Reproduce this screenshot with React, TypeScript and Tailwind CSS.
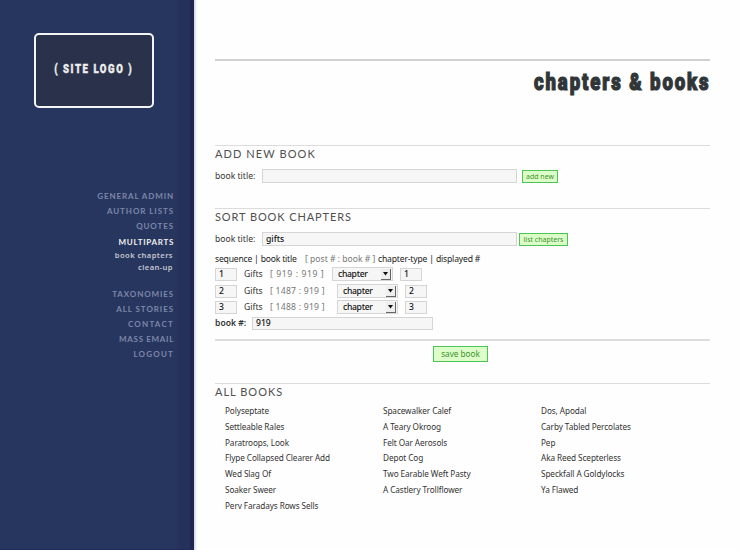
import React from 'react';

const primary = [
  ['GENERAL ADMIN', 'tracking-[0.88px]'],
  ['AUTHOR LISTS', 'tracking-[0.93px]'],
  ['QUOTES', 'tracking-[0.9px]'],
];
const secondary = [
  ['TAXONOMIES', 'tracking-[0.88px]'],
  ['ALL STORIES', 'tracking-[0.93px]'],
  ['CONTACT', 'tracking-[1.22px]'],
  ['MASS EMAIL', 'tracking-[0.68px]'],
  ['LOGOUT', 'tracking-[1.18px]'],
];

const chapters = [
  { seq: '1', ref: '[ 919 : 919 ]', refWidth: 'w-[62px]', tracking: 'tracking-[0.6px]' },
  { seq: '2', ref: '[ 1487 : 919 ]', refWidth: 'w-[67px]', tracking: 'tracking-[0.25px]' },
  { seq: '3', ref: '[ 1488 : 919 ]', refWidth: 'w-[67px]', tracking: 'tracking-[0.25px]' },
];

const books = [
  ['Polyseptate', 'Settleable Rales', 'Paratroops, Look', 'Flype Collapsed Clearer Add', 'Wed Slag Of', 'Soaker Sweer', 'Perv Faradays Rows Sells'],
  ['Spacewalker Calef', 'A Teary Okroog', 'Felt Oar Aerosols', 'Depot Cog', 'Two Earable Weft Pasty', 'A Castlery Trollflower'],
  ['Dos, Apodal', 'Carby Tabled Percolates', 'Pep', 'Aka Reed Scepterless', 'Speckfall A Goldylocks', 'Ya Flawed'],
];

function Heading({ children, className }: { children: React.ReactNode; className: string }) {
  return (
    <h2 className={`h-[18px] border-t border-[#dcdcdc] font-['Lato',sans-serif] text-[11px] leading-[15px] font-normal text-[#505050] ${className}`}>
      {children}
    </h2>
  );
}

function Field({ value, className }: { value?: string; className: string }) {
  return (
    <div className={`flex shrink-0 items-center border border-[#d5d5d5] bg-[#f6f6f6] pl-[3px] font-medium text-[#111] ${className}`}>
      {value}
    </div>
  );
}

function Button({ children, className }: { children: React.ReactNode; className: string }) {
  return (
    <button className={`flex shrink-0 items-center justify-center border border-[#4cc552] bg-[#dcffca] text-[#3f8f2b] ${className}`}>
      {children}
    </button>
  );
}

function ChapterSelect({ className }: { className: string }) {
  return (
    <div className={`flex w-[61px] shrink-0 items-center justify-between border border-[#d5d5d5] bg-[#f6f6f6] pr-[1px] pl-[5px] font-medium text-[#111] ${className}`}>
      <span className="tracking-[-0.3px]">chapter</span>
      <span className="flex h-[11px] w-[10px] items-center justify-center border-r border-b border-[#666] bg-[#eee]">
        <svg width="5" height="4" viewBox="0 0 5 4"><path d="M0 0h5L2.5 3.5z" fill="#111" /></svg>
      </span>
    </div>
  );
}

export default function App() {
  return (
    <div className="flex h-[550px] w-[740px] overflow-hidden bg-[#fefefe] font-['Noto_Sans',sans-serif] text-[8.6px] leading-none whitespace-nowrap text-[#333]">
      <aside className="flex w-[194px] shrink-0 border-b border-[#202c55] bg-[#27365e]">
        <div className="flex h-full w-[176px] flex-col">
          <div className="mt-[33px] ml-[34px] flex h-[75px] w-[120px] items-center justify-center rounded-[5px] border-2 border-[#f4f4f4] bg-[#2a324b]">
            <span className="-mt-[4px] scale-x-[0.71] font-['Roboto',sans-serif] text-[13.5px] font-black tracking-[2.2px] text-[#eee] [-webkit-text-stroke:0.4px_#eee]">( SITE LOGO )</span>
          </div>
          <nav className="mt-[81px] flex flex-col pr-[2px] text-right font-['Lato',sans-serif] text-[8px] font-bold text-[#7e87aa]">
            {primary.map(([t, tracking]) => <a key={t} className={`h-[15px] leading-[15px] ${tracking}`}>{t}</a>)}
            <a className="h-[15px] leading-[16px] tracking-[0.7px] text-[#f0f0f0]">MULTIPARTS</a>
            <div className="flex h-[38px] flex-col pr-[1px] font-['Noto_Sans',sans-serif] text-[7.6px] font-semibold tracking-[0.4px] text-[#c3c6d0]">
              <a className="h-[12px] leading-[12px]">book chapters</a>
              <a className="h-[12px] leading-[12px]">clean-up</a>
            </div>
            {secondary.map(([t, tracking]) => <a key={t} className={`h-[15px] leading-[15px] ${tracking}`}>{t}</a>)}
          </nav>
        </div>
        <div className="h-full w-[3px] bg-[#2a315d]" />
        <div className="h-full w-[11px] bg-[#24315b]" />
        <div className="h-full w-1 bg-[#20264f]" />
      </aside>
      <div className="h-full w-[3px] shrink-0 bg-linear-to-r from-[#cbd5e0] to-[#fefefe]" />
      <main className="ml-[18px] w-[495px] shrink-0">
        <header className="mt-[59px] flex h-[86px] justify-end border-t-2 border-[#d0d0d0]">
          <h1 className="mt-[8px] -mr-[1px] h-[26px] origin-right scale-x-[0.79] font-['Roboto',sans-serif] text-[23.5px] leading-[26px] font-black tracking-[2.4px] text-[#303638] [-webkit-text-stroke:1.2px_#303638]">chapters &amp; books</h1>
        </header>

        <section className="h-[63px]">
          <Heading className="tracking-[1.08px]">ADD NEW BOOK</Heading>
          <div className="mt-[6px] flex items-center">
            <span className="w-[47px]">book title:</span>
            <Field className="h-[14px] w-[255px]" />
            <Button className="ml-[5px] h-[13px] w-[36px] text-[7px]">add new</Button>
          </div>
        </section>

        <section className="h-[175px]">
          <Heading className="tracking-[0.9px]">SORT BOOK CHAPTERS</Heading>
          <div className="mt-[6px] flex items-center">
            <span className="w-[47px]">book title:</span>
            <Field value="gifts" className="h-[14px] w-[255px]" />
            <Button className="ml-[2px] h-[13px] w-[49px] text-[7px]">list chapters</Button>
          </div>
          <div className="mt-[7px] flex h-[13px] items-center text-[#222]">
            <span className="w-[90px] tracking-[-0.2px]">sequence | book title</span>
            <span className="w-[73px] text-[#777]">[ post # : book # ]</span>
            <span className="tracking-[-0.18px]">chapter-type | displayed #</span>
          </div>
          <div className="mt-[1px] flex flex-col">
            {chapters.map((c, i) => (
              <div key={c.seq} className={`flex h-[14px] items-center ${i === 0 ? 'mb-[3px]' : 'mb-[2px]'}`}>
                <Field value={c.seq} className="h-[13px] w-[22px]" />
                <span className="ml-[7px] w-[26px]">Gifts</span>
                <span className={`text-[#777] ${c.tracking} ${c.refWidth}`}>{c.ref}</span>
                <ChapterSelect className="h-[14px]" />
                <Field value={c.seq} className="ml-[7px] h-[13px] w-[22px]" />
              </div>
            ))}
          </div>
          <div className="flex h-[14px] items-center">
            <span className="w-[37px] font-semibold">book #:</span>
            <Field value="919" className="h-[13px] w-[181px]" />
          </div>
          <div className="mt-[9px] flex border-t-2 border-[#dcdcdc] pt-[5px] pl-[218px]">
            <Button className="h-4 w-[55px] text-[8.2px]">save book</Button>
          </div>
        </section>

        <section>
          <Heading className="tracking-[1px]">ALL BOOKS</Heading>
          <div className="mt-[2px] grid grid-cols-[158px_158px_158px] pl-[10px] text-[8.2px] tracking-[-0.08px]">
            {books.map((column) => (
              <ul key={column[0]}>
                {column.map((b) => <li key={b} className="h-[15.8px] leading-[16px]">{b}</li>)}
              </ul>
            ))}
          </div>
        </section>
      </main>
    </div>
  );
}
